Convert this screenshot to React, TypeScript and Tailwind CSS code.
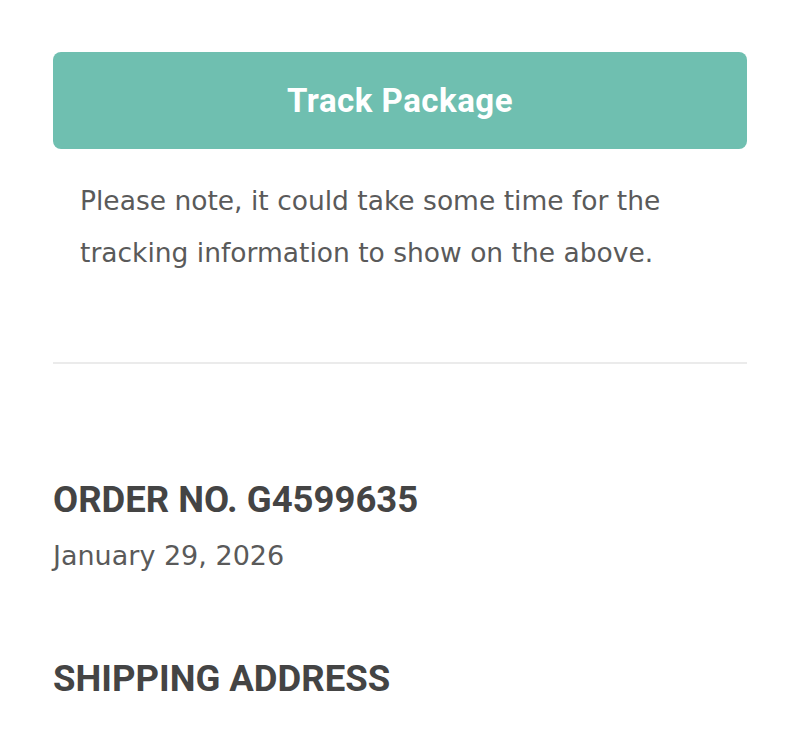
export default function App() {
  return (
    <div className="min-h-screen bg-white px-[53px] pt-[52px]">
      <button className="flex h-[97px] w-full items-center justify-center rounded-[8px] bg-[#6fbfb0] text-[33px] font-bold tracking-[0.5px] text-white [font-family:Roboto,sans-serif]">
        Track Package
      </button>
      <p className="mt-[26px] px-[27px] text-[26.5px] leading-[52px] text-[#5a5a5a] [font-family:'DejaVu_Sans',sans-serif]">
        Please note, it could take some time for the tracking information to show on the above.
      </p>
      <div className="mt-[83px] border-t-2 border-[#ebebeb]" />
      <h2 className="mt-[115px] text-[36.5px] font-bold leading-[42px] text-[#444] [font-family:Roboto,sans-serif]">
        ORDER NO. G4599635
      </h2>
      <p className="mt-[17px] text-[27px] leading-[36px] text-[#5a5a5a] [font-family:'DejaVu_Sans',sans-serif]">
        January 29, 2026
      </p>
      <h2 className="mt-[84px] text-[36.5px] font-bold leading-[42px] text-[#444] [font-family:Roboto,sans-serif]">
        SHIPPING ADDRESS
      </h2>
    </div>
  );
}
